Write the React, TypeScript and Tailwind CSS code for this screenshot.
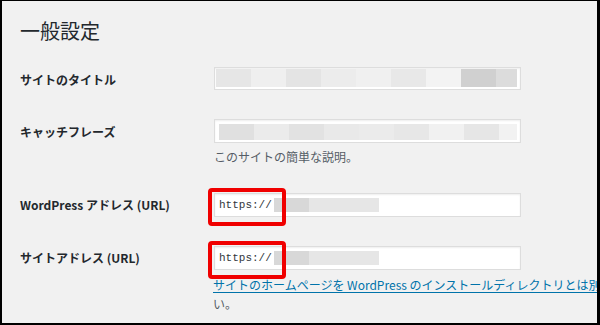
const jp = "font-['Noto_Sans_CJK_JP','Noto_Sans',sans-serif]";

const row1 = ["#e6e6e6", "#efefef", "#e4e4e4", "#ececec", "#f0f0f0", "#e8e8e8", "#f3f3f3", "#d0d0d0", "#dcdcdc"];
const row2 = ["#e0e0e0", "#ebebeb", "#e2e2e2", "#e9e9e9", "#ebebeb", "#e7e7e7", "#f1f1f1", "#e6e6e6", "#f2f2f2"];

function Mosaic({ colors, last }: { colors: string[]; last: number }) {
  return (
    <div className="flex h-[18px]">
      {colors.map((c, i) => (
        <div
          key={i}
          className="h-full"
          style={{ backgroundColor: c, width: i === colors.length - 1 ? last : 35 }}
        />
      ))}
    </div>
  );
}

function Field({ label, children, labelPad = "pt-0" }: { label: string; children: React.ReactNode; labelPad?: string }) {
  return (
    <div className="flex items-center">
      <div className={`w-[194px] shrink-0 text-[12px] font-bold text-[#23282d] ${labelPad}`}>{label}</div>
      {children}
    </div>
  );
}

function UrlInput() {
  return (
    <div className="relative h-[24px] w-[307px] border border-[#dddddd] bg-white shadow-[inset_0_1px_2px_rgba(0,0,0,0.07)]">
      <div className="flex h-full items-center pl-[4px]">
        <span className="font-['Liberation_Mono',monospace] text-[11px] leading-none text-[#32373c]">https://</span>
        <div className="ml-[2px] h-[14px] w-[35px] bg-[#d8d8d8]" />
        <div className="h-[14px] w-[70px] bg-[#e6e6e6]" />
      </div>
      <div className="absolute left-[-7px] top-[-6px] h-[38px] w-[78px] rounded-[4px] border-[4px] border-[#f00000]" />
    </div>
  );
}

export default function App() {
  return (
    <div
      className={`h-[325px] w-[600px] overflow-hidden border-t border-l-2 border-r-[3px] border-b-2 border-black bg-[#f1f1f1] pl-[18px] ${jp}`}
    >
      <h1 className="mt-[18px] text-[20px] font-normal leading-[24px] text-[#23282d]">一般設定</h1>

      <div className="mt-[24px]">
        <Field label="サイトのタイトル" labelPad="pt-[3px]">
          <div className="h-[23px] w-[307px] border border-[#dddddd] bg-white pl-[1px] pt-[1px] shadow-[inset_0_1px_2px_rgba(0,0,0,0.07)]">
            <Mosaic colors={row1} last={21} />
          </div>
        </Field>
      </div>

      <div className="mt-[29px]">
        <Field label="キャッチフレーズ" labelPad="pt-[1px]">
          <div className="h-[24px] w-[307px] border border-[#dddddd] bg-white pl-[4px] pt-[4px] shadow-[inset_0_1px_2px_rgba(0,0,0,0.07)]">
            <div className="flex h-[16px]">
              {row2.map((c, i) => (
                <div key={i} className="h-full" style={{ backgroundColor: c, width: i === row2.length - 1 ? 18 : 35 }} />
              ))}
            </div>
          </div>
        </Field>
        <p className="ml-[194px] mt-[6px] text-[12px] leading-[16px] text-[#555d66]">このサイトの簡単な説明。</p>
      </div>

      <div className="mt-[28px]">
        <Field label="WordPress アドレス (URL)">
          <UrlInput />
        </Field>
      </div>

      <div className="mt-[29px]">
        <Field label="サイトアドレス (URL)">
          <UrlInput />
        </Field>
        <div className="ml-[193px] mt-[5px] w-[500px] text-[12px] leading-[19px] text-[#555d66]">
          <div className="whitespace-nowrap">
            <a className="text-[#0073aa] underline underline-offset-2">
              サイトのホームページを WordPress のインストールディレクトリとは別にしたい場合
            </a>
            は、ここにアドレスを入力してくださ
          </div>
          <div>い。</div>
        </div>
      </div>
    </div>
  );
}
